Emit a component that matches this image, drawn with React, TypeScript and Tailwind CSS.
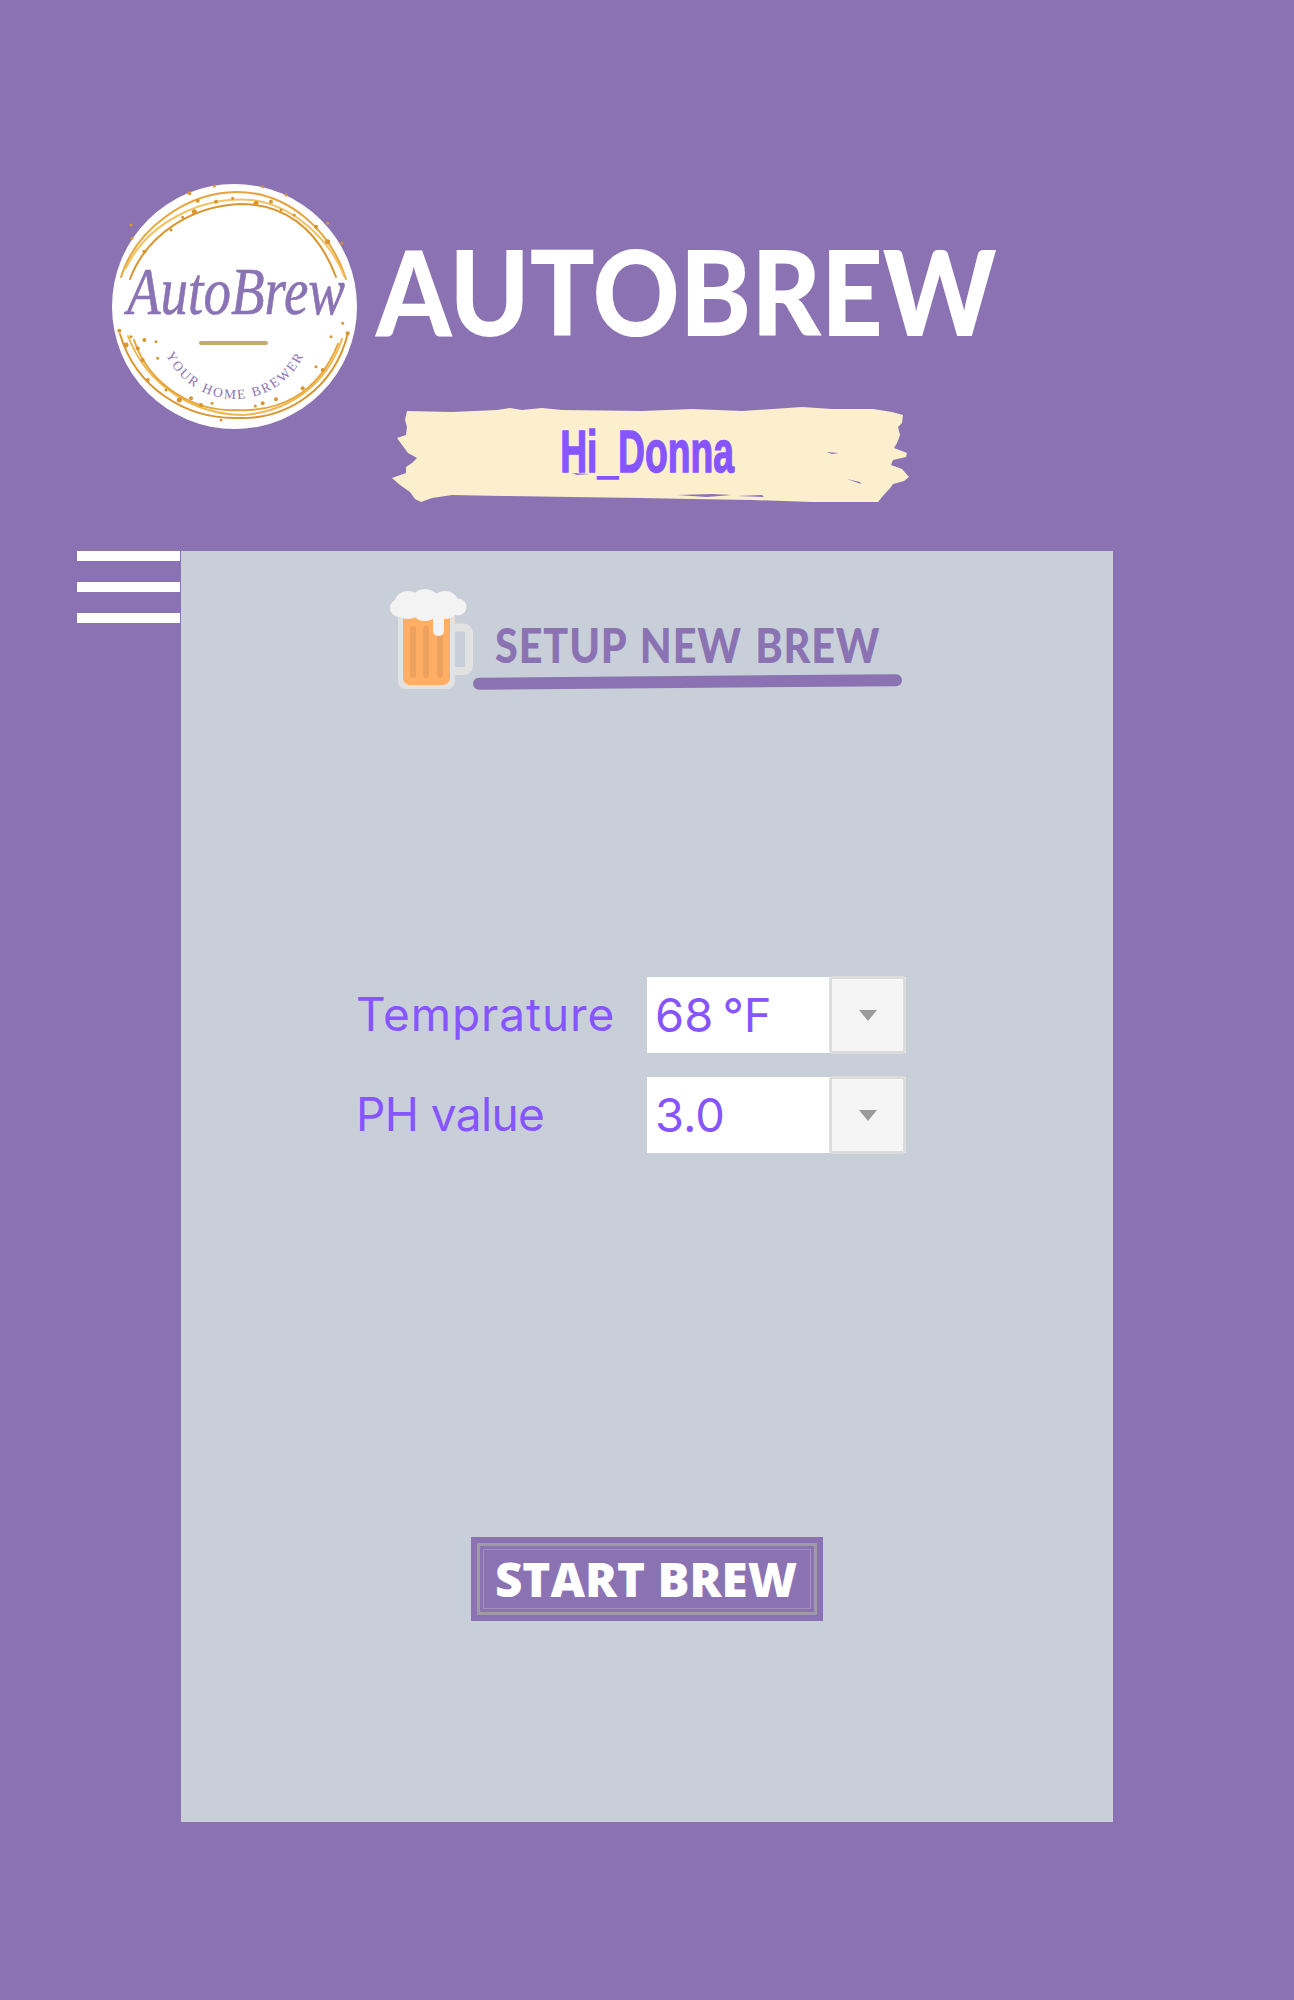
import React from "react";

// dot positions read off the logo, in 3x px of the crop
const LOGO_DOTS = [
  [300, 100, 2], [325, 122, 2], [315, 155, 2.5], [380, 125, 2], [430, 115, 1.5], [500, 130, 2.5], [545, 125, 2], [590, 105, 1.5],
  [520, 80, 1.5], [375, 78, 1.5], [575, 150, 1.5], [615, 165, 1.5], [680, 200, 2], [715, 245, 2.5], [757, 250, 1.5], [715, 190, 1.5],
  [125, 195, 1.5], [128, 235, 1.5], [165, 275, 2], [245, 210, 1.5], [280, 172, 1.5], [90, 512, 2], [125, 530, 1.5], [110, 555, 2.5],
  [145, 565, 2], [165, 540, 2], [200, 545, 1.5], [160, 600, 2], [205, 595, 1.5], [175, 660, 2], [230, 690, 1.5], [270, 720, 2.5],
  [305, 715, 2], [335, 735, 2], [368, 730, 1.5], [395, 780, 1.5], [498, 738, 1.5], [520, 730, 2], [560, 718, 2], [640, 685, 2],
  [700, 630, 2], [725, 530, 1.5], [775, 520, 2], [760, 490, 1.5], [680, 620, 1.5],
];

function Logo() {
  return (
    <svg width="245" height="245" viewBox="0 0 245 245" className="shrink-0 overflow-visible">
      <circle cx="122.5" cy="122.5" r="122.5" fill="#ffffff" />
      <g fill="none" strokeWidth="2" strokeLinecap="round">
        <path d="M9 93 C24 45 75 8 125 8 C175 8 218 45 234 95" stroke="#e6a53c" />
        <path d="M18 95 C35 50 80 22 128 20 C170 20 205 42 224 93" stroke="#d9962f" />
        <path d="M14 84 C36 38 90 12 140 16 C185 22 220 60 232 92" stroke="#f3c263" />
        <path d="M8 150 C24 205 75 235 125 234 C175 236 222 205 236 149" stroke="#d9962f" />
        <path d="M16 152 C34 200 80 230 130 231 C178 228 215 200 230 155" stroke="#f0b650" />
        <path d="M22 156 C38 204 85 228 125 226 C165 228 205 212 226 160" stroke="#e6a53c" />
      </g>
      <g fill="#d9962f">
        {LOGO_DOTS.map(([x, y, r], i) => (
          <circle key={i} cx={(x - 68) / 3} cy={(y - 72) / 3} r={r} />
        ))}
      </g>
      <text x="124" y="130" textAnchor="middle" fontFamily="'Liberation Serif', serif" fontStyle="italic" fontSize="68" fill="#8a73b5" stroke="#8a73b5" strokeWidth="0.6" textLength="218" lengthAdjust="spacingAndGlyphs">
        AutoBrew
      </text>
      <rect x="87" y="157" width="69" height="4" rx="2" fill="#c6aa6c" />
      <defs>
        <path id="logo-arc" d="M50 160 A76 76 0 0 0 196 160" />
      </defs>
      <text fontFamily="'Liberation Serif', serif" fontSize="13.5" letterSpacing="2" fill="#8a73b5">
        <textPath href="#logo-arc" startOffset="50%" textAnchor="middle">
          YOUR HOME BREWER
        </textPath>
      </text>
    </svg>
  );
}

function Brush() {
  return (
    <svg viewBox="0 0 517 95" preserveAspectRatio="none" className="absolute inset-0 h-full w-full">
      <path
        fill="#fcefcd"
        d="M15 4 L60 5 L105 3 L118 1 L130 3 L150 1 L170 3 L250 4 L300 2 L350 4 L410 0 L440 2 L481 2 L500 5 L511 8 L510 16 L506 20 L508 28 L505 36 L502 41 L515 46 L514 50 L501 53 L499 58 L510 62 L517 70 L512 74 L501 77 L499 80 L490 90 L486 95 L420 95 L360 93 L300 92 L250 91 L180 90 L110 89 L60 88 L40 91 L29 95 L23 92 L18 85 L8 78 L0 71 L14 66 L14 60 L20 56 L25 51 L16 46 L5 31 L14 28 L15 20 L13 13 Z"
      />
      <g fill="#8b73b3">
        <path d="M285 88 L320 87 L340 88 L315 90 Z" />
        <path d="M345 89 L370 88 L372 90 Z" />
        <path d="M455 72 L468 75 L469 77 Z" />
        <path d="M435 45 L447 46 L440 47 Z" />
        <path d="M180 66 L198 67 L185 68 Z" />
      </g>
    </svg>
  );
}

function Mug() {
  return (
    <svg width="90" height="108" viewBox="0 0 90 108" className="shrink-0">
      <path d="M66 42.500 H76 a5 5 0 0 1 5 5 V81 a5 5 0 0 1 -5 5 H66" fill="none" stroke="#e2e2e2" strokeWidth="8" />
      <rect x="10" y="25" width="57" height="79" rx="8" fill="#e2e2e2" />
      <rect x="15" y="25" width="47" height="75" rx="7" fill="#ffae64" />
      <rect x="22" y="41" width="6" height="52" rx="3" fill="#eca25e" />
      <rect x="35" y="41" width="6" height="52" rx="3" fill="#eca25e" />
      <rect x="49" y="41" width="6" height="52" rx="3" fill="#eca25e" />
      <g fill="#f3f3f3">
        <circle cx="11" cy="23" r="9" />
        <circle cx="20" cy="20" r="14" />
        <circle cx="37" cy="20" r="16" />
        <circle cx="57" cy="20" r="14" />
        <circle cx="70" cy="22" r="8.500" />
        <rect x="45" y="20" width="11" height="31" rx="5.500" />
      </g>
    </svg>
  );
}

function SelectRow({ label, value, labelClass }: { label: string; value: string; labelClass: string }) {
  return (
    <div className="flex items-center">
      <div className={`w-[291px] pb-[2px] text-[46px] leading-none text-[#8655ff] ${labelClass}`}>{label}</div>
      <div className="flex h-[76px] w-[259px] items-stretch bg-white">
        <div className="flex flex-1 items-center pb-[2px] pl-[8px] text-[47px] leading-none text-[#8655ff] [word-spacing:-4px]">{value}</div>
        <div className="-my-[1px] flex w-[77px] items-center justify-center rounded-[4px] border-[3px] border-[#dcdcdc] bg-[#f5f5f5]">
          <span className="h-0 w-0 border-x-[9px] border-t-[11px] border-x-transparent border-t-[#9b9b9b]" />
        </div>
      </div>
    </div>
  );
}

export default function App() {
  return (
    <div className="min-h-[2000px] bg-[#8b73b3] pt-[184px] font-['Inter',sans-serif]">
      <div className="flex pl-[112px]">
        <Logo />
        <div className="ml-[19px] flex flex-col">
          <h1 className="mt-[48px] origin-left scale-x-[0.912] whitespace-nowrap text-[118px] font-black leading-[118px] text-white font-['Lato',sans-serif]">
            AUTOBREW
          </h1>
          <div className="relative ml-[16px] mt-[57px] flex h-[95px] w-[517px] items-center justify-center">
            <Brush />
            <span className="relative -ml-[6px] -mt-[6px] origin-center scale-x-[0.62] whitespace-nowrap text-[60px] font-bold leading-none text-[#8655ff] [-webkit-text-stroke:1.5px_#8655ff] font-['Liberation_Sans',sans-serif]">
              Hi_Donna
            </span>
          </div>
        </div>
      </div>

      <div className="mt-[49px] flex items-start pl-[77px]">
        <div className="flex w-[104px] shrink-0 flex-col gap-[21px] pr-[1px]">
          <span className="h-[10px] bg-white" />
          <span className="h-[10px] bg-white" />
          <span className="h-[10px] bg-white" />
        </div>
        <main className="flex h-[1271px] w-[932px] flex-col bg-[#c8cfd9]">
          <div className="ml-[207px] mt-[34px] flex items-start">
            <Mug />
            <div className="relative -ml-[5px] mt-[32px]">
              <h2 className="ml-[22px] origin-left scale-x-[0.88] whitespace-nowrap text-[47px] font-black leading-[56px] tracking-[1px] text-[#8b73b3] [word-spacing:3px] font-['Lato',sans-serif]">
                SETUP NEW BREW
              </h2>
              <div className="mt-[3px] h-[12px] w-[429px] -rotate-[0.5deg] rounded-full bg-[#8b73b3]" />
            </div>
          </div>

          <div className="ml-[175px] mt-[284px] flex flex-col gap-[24px]">
            <SelectRow label="Temprature" value="68 °F" labelClass="tracking-[0.9px]" />
            <SelectRow label="PH value" value="3.0" labelClass="tracking-[-0.6px]" />
          </div>

          <button className="ml-[290px] mt-[384px] h-[84px] w-[352px] bg-[#8b73b3] p-[6px]">
            <span className="block h-full border-[3px] border-[#a09aa8] p-[3px]">
              <span className="flex h-full items-center justify-center border border-[#a08fc0] pr-[2px] text-[47.500px] font-extrabold leading-none text-white font-['Open_Sans',sans-serif]">
                START BREW
              </span>
            </span>
          </button>
        </main>
      </div>
    </div>
  );
}
